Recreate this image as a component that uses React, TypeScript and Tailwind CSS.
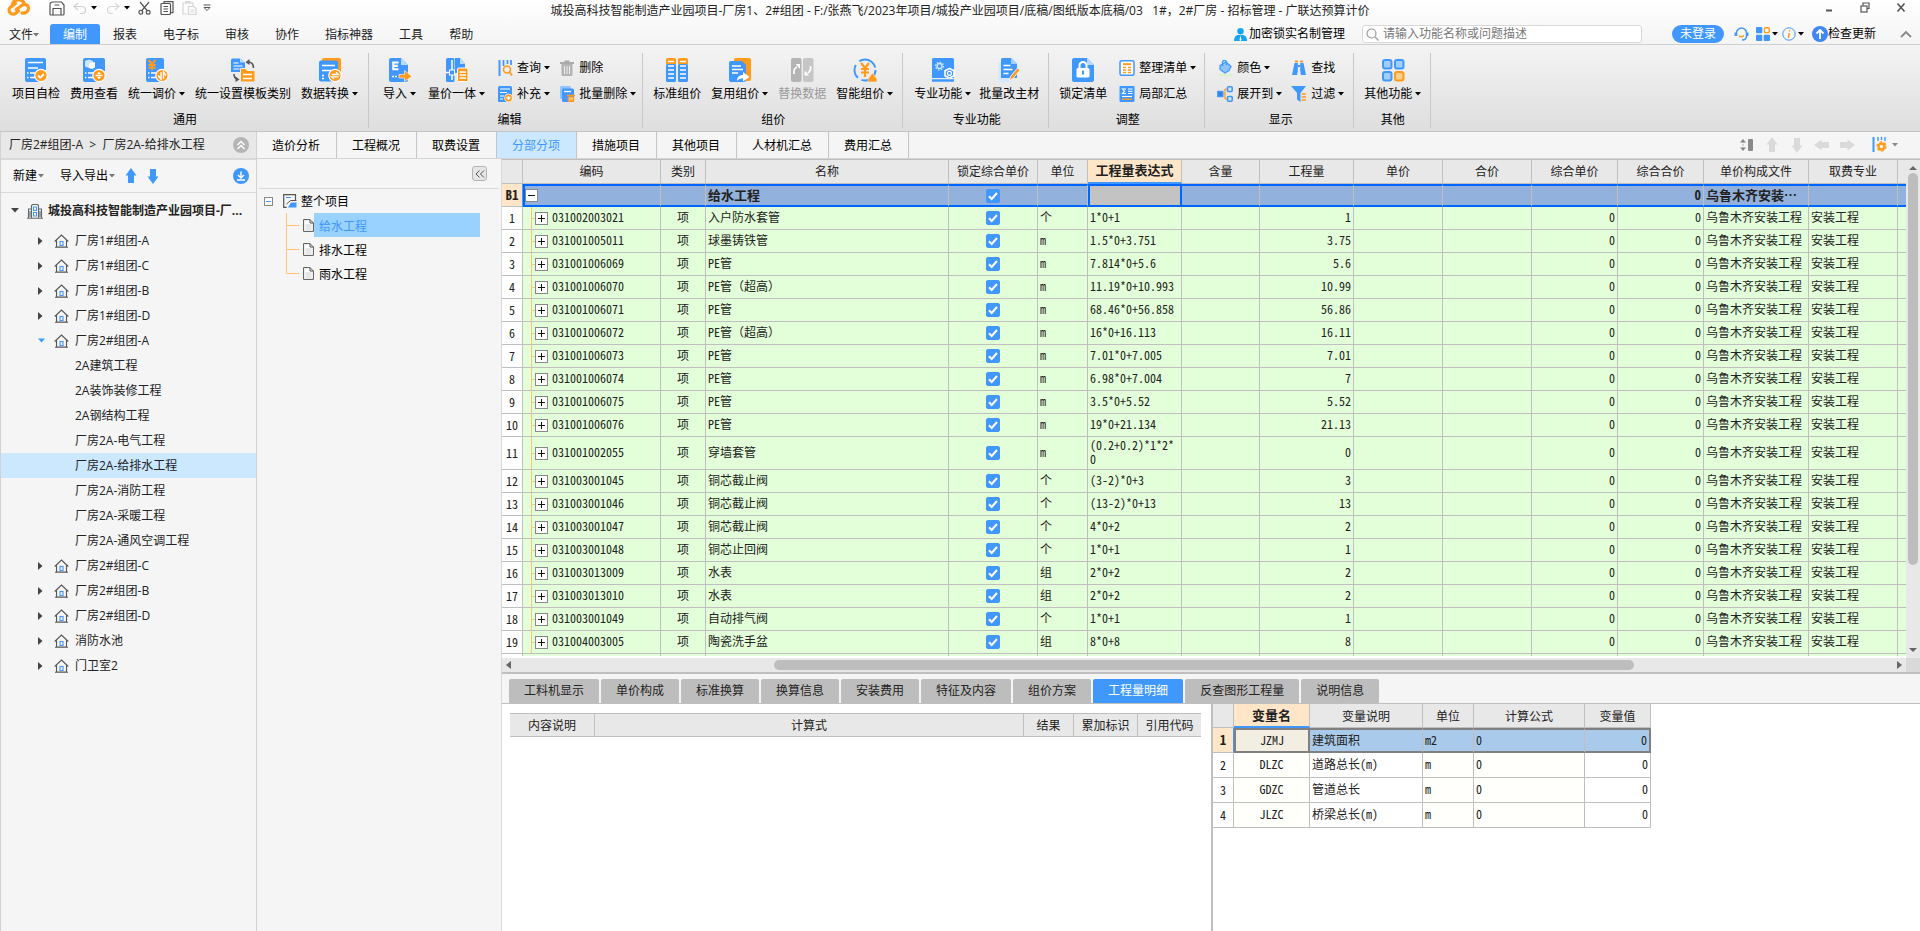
import React, { useState } from 'react';

const ui = "font-['Open_Sans','Noto_Sans_CJK_SC',sans-serif]";
const grid = "font-['Noto_Sans_CJK_SC',sans-serif] [font-feature-settings:'hwid']";

const BLUE = '#4098ff';
const ORANGE = '#ff9a1a';

/* ---------- icons ---------- */

const Caret = ({ className = 'text-black' }: { className?: string }) => (
  <svg width="6" height="4" viewBox="0 0 6 4" className={`shrink-0 ${className}`}>
    <path d="M0 0h6L3 3.6z" fill="currentColor" />
  </svg>
);

const Big = ({ children }: { children: React.ReactNode }) => (
  <svg width="24" height="24" viewBox="0 0 24 24" fill="none" className="shrink-0">
    {children}
  </svg>
);

const Small = ({ children }: { children: React.ReactNode }) => (
  <svg width="16" height="16" viewBox="0 0 16 16" fill="none" className="shrink-0">
    {children}
  </svg>
);

const Sheet = () => (
  <>
    <rect x="1" width="18" height="24" rx="2" fill={BLUE} />
    <path d="M6 15h6M6 19.500h5" stroke="#fff" strokeWidth="1.500" />
    <path d="M3 15h1.500M3 19.500h1.500" stroke="#fff" strokeWidth="1.500" />
  </>
);

const Badge = () => <circle cx="17" cy="17.500" r="6.200" fill={ORANGE} stroke="#fff" strokeWidth="1.200" />;

const CheckIcon = () => (
  <Big>
    <Sheet />
    <path d="M18 0h2a2 2 0 0 1 2 2v10h-4z" fill={BLUE} />
    <path d="M4 4.500h15M4 10h10" stroke="#fff" strokeWidth="1.600" />
    <Badge />
    <path d="M14 17.500l2.300 2.300L20 16" stroke="#fff" strokeWidth="1.800" />
  </Big>
);

const CostIcon = () => (
  <Big>
    <Sheet />
    <path d="M18 0h3a2 2 0 0 1 2 2v11h-5z" fill={BLUE} />
    <path d="M3 3l4-1.500 4 1.500v5.500l-4 1.500-4-1.500z" fill="#cfe6ff" />
    <path d="M7 5.500l6-1.500v5.500l-3 1.500-3-1z" fill="#fff" />
    <Badge />
    <path d="M13.500 17.500h7" stroke="#fff" strokeWidth="1.500" />
    <path d="M15 16l2-2.300 2 2.300zM15 19l2 2.300 2-2.300z" fill="#fff" />
  </Big>
);

const PriceIcon = () => (
  <Big>
    <Sheet />
    <path d="M3.500 2l3.500 4 3.500-4M7 6v6M3.500 7h7M3.500 9.800h7" stroke={ORANGE} strokeWidth="2" />
    <Badge />
    <path d="M16 14v7l-3-3.500M18.500 21v-7l2.500 3.500" stroke="#fff" strokeWidth="1.400" />
  </Big>
);

const TemplateIcon = () => (
  <Big>
    <path d="M0 2A1.500 1.500 0 0 1 1.500.5H9l5 4V14H0z" fill={BLUE} />
    <path d="M9 .5l5 4H9z" fill="#b8dbff" />
    <path d="M2.500 5h5M2.500 8h9M2.500 11h6" stroke="#fff" strokeWidth="1.200" />
    <path d="M9.500 10.500h5l1.500 2h8V24H9.500z" fill={ORANGE} stroke="#eee" />
    <path d="M12 16.500h9M12 20.500h9" stroke="#fff" strokeWidth="1.500" />
    <path d="M17 4c3.500 0 5.500 2 5.500 6" stroke="#555" strokeWidth="1.600" />
    <path d="M14.500 4.200l4-3.200v6z" fill="#555" />
    <path d="M3 16c0 3 1.500 4.500 3 5" stroke="#555" strokeWidth="1.600" />
    <path d="M8.500 21.500L4.500 24v-5.500z" fill="#555" />
  </Big>
);

const ConvertIcon = () => (
  <Big>
    <rect x="4" width="19" height="20" rx="1.500" fill={ORANGE} />
    <rect x="1" y="2.500" width="19" height="21" rx="2" fill={BLUE} />
    <path d="M4 7.500h13M4 12.500h9M4 17.500h2M4 20.500h2" stroke="#fff" strokeWidth="1.600" />
    <Badge />
    <path d="M13.500 16.500h7l-2.500-2.200M20.500 18.800h-7l2.500 2.200" stroke="#fff" strokeWidth="1.300" />
  </Big>
);

const ImportIcon = () => (
  <Big>
    <path d="M1 2a2 2 0 0 1 2-2h10l7 7v15a2 2 0 0 1-2 2H3a2 2 0 0 1-2-2z" fill={BLUE} />
    <path d="M13 0l7 7h-7z" fill="#b8dbff" />
    <path d="M10.500 4.500H5.300v6.800h5.200M5.300 7.900h4.500" stroke="#fff" strokeWidth="2.100" />
    <path d="M11 16.500h5.500v-4L24 18.500l-7.500 5v-3.500H11z" fill={ORANGE} stroke="#fff" strokeWidth=".6" />
    <path d="M4 18.500h2M7 18.500h2" stroke="#fff" strokeWidth="1.600" />
  </Big>
);

const MeasureIcon = () => (
  <Big>
    <rect x="1" width="8.500" height="24" rx="1.500" fill={BLUE} />
    <path d="M10 0h5l5 6v9H10z" fill={BLUE} />
    <path d="M15 0l5 6h-5z" fill="#b8dbff" />
    <path d="M1 14.500h9M7 2v20" stroke="#fff" strokeWidth="1.500" />
    <rect x="4.500" y="12" width="5" height="5" fill={BLUE} stroke="#fff" />
    <rect x="12.500" y="10" width="10.500" height="13.500" rx="1" fill={ORANGE} stroke="#fff" />
    <path d="M14.500 14h6.500M14.500 17h6.500M14.500 20h6.500" stroke="#fff" strokeWidth="1.300" />
  </Big>
);

const StandardIcon = () => (
  <Big>
    {[1, 13].map((x) => (
      <g key={x}>
        <rect x={x} y="0" width="10" height="7" rx="1.500" fill={ORANGE} />
        <rect x={x} y="6" width="10" height="18" rx="1.500" fill={BLUE} />
        <path
          d={`M${x + 2} 3.500h6M${x + 2} 8h6M${x + 2} 12h6M${x + 2} 16h6M${x + 2} 20h6`}
          stroke="#fff"
          strokeWidth="1.400"
        />
      </g>
    ))}
  </Big>
);

const ReuseIcon = () => (
  <Big>
    <rect x="6" width="17" height="23" rx="2" fill={ORANGE} />
    <path d="M1 5a2 2 0 0 1 2-2h11l4 4v15a2 2 0 0 1-2 2H3a2 2 0 0 1-2-2z" fill={BLUE} />
    <path d="M4 8h9M4 11.500h11M4 15h6" stroke="#fff" strokeWidth="1.500" />
    <path d="M9 23c0-4 2.500-6 6-6v-3l6.500 5-6.500 4.500V20.500c-2.500 0-4.500.5-6 2.500z" fill="#fff" />
  </Big>
);

const ReplaceIcon = () => (
  <Big>
    <rect x="1" width="10.500" height="24" rx="2" fill="#b4b4b4" />
    <rect x="13" width="10.500" height="24" rx="2" fill="#c6c6c6" />
    <path d="M4 16c-.5-4 .5-6 3-7" stroke="#fff" strokeWidth="1.800" />
    <path d="M5.500 6H10v5z" fill="#fff" />
    <path d="M20.500 8c.5 4-.5 6-3 7" stroke="#fff" strokeWidth="1.800" />
    <path d="M19 17.500h-4.500v-5z" fill="#fff" />
  </Big>
);

const SmartIcon = () => (
  <Big>
    <circle cx="12" cy="12" r="10.500" stroke={BLUE} strokeWidth="2" strokeDasharray="20 4 14 5" />
    <path d="M8 5l4 5 4-5M12 10v9M8 11h8M8 14.500h8" stroke={ORANGE} strokeWidth="2.200" />
    <path d="M15 21l4.500-6L24 21v3h-9z" fill={ORANGE} stroke="#eee" strokeWidth=".6" />
  </Big>
);

const ProIcon = () => (
  <Big>
    <path d="M1 1.500A1.500 1.500 0 0 1 2.500 0h19A1.500 1.500 0 0 1 23 1.500V20H1z" fill={BLUE} />
    <path d="M1 22.500h22" stroke={BLUE} strokeWidth="2.500" />
    <circle cx="8.500" cy="8" r="2.500" stroke="#d5e9ff" strokeWidth="1.300" />
    <circle cx="8.500" cy="8" r="4" stroke="#d5e9ff" strokeWidth="1.200" strokeDasharray="1.500 1.600" />
    <path d="M18.500 10.500l4.500 2.300v4.900L18.500 20 14 17.700v-4.900z" fill={BLUE} stroke="#fff" strokeWidth="1.600" />
    <circle cx="18.500" cy="15.300" r="2" stroke="#fff" strokeWidth="1.200" />
  </Big>
);

const BatchEditIcon = () => (
  <Big>
    <rect x="1.500" y="4" width="14" height="20" rx="2" fill="#d3e8ff" />
    <path d="M4 1.500A1.500 1.500 0 0 1 5.500 0H14l6 6v14H4z" fill={BLUE} />
    <path d="M14 0l6 6h-6z" fill="#9fd0ff" />
    <path d="M6.500 7.500h7M6.500 11.500h9M6.500 15.500h5" stroke="#fff" strokeWidth="1.600" />
    <path d="M12.500 22.500l1-4 7-8.500 2.500 2-7 8.500z" fill={ORANGE} stroke="#fff" strokeWidth=".8" />
  </Big>
);

const LockIcon = () => (
  <Big>
    <path d="M1 2a2 2 0 0 1 2-2h13l7 7v15a2 2 0 0 1-2 2H3a2 2 0 0 1-2-2z" fill={BLUE} />
    <path d="M16 0l7 7h-7z" fill="#b8dbff" />
    <path d="M8.500 11V7.500a3.500 3.500 0 0 1 7 0V11" stroke="#fff" strokeWidth="2" />
    <rect x="5.500" y="10" width="13" height="9.500" rx="1.500" fill="#fff" />
    <path d="M12 12.500v4" stroke={BLUE} strokeWidth="2" />
  </Big>
);

const OtherIcon = () => (
  <Big>
    <rect x="2" y="2" width="8.500" height="8.500" rx="2" fill="#9fceff" stroke={BLUE} strokeWidth="2" />
    <rect x="14" y="2" width="8.500" height="8.500" rx="2" fill="#9fceff" stroke={BLUE} strokeWidth="2" />
    <rect x="2" y="14" width="8.500" height="8.500" rx="2" fill="#9fceff" stroke={BLUE} strokeWidth="2" />
    <rect x="14" y="14" width="8.500" height="8.500" rx="2" fill="#ffd08a" stroke={ORANGE} strokeWidth="2" />
  </Big>
);

const QueryIcon = () => (
  <Small>
    <path d="M2.500 0v16" stroke={BLUE} strokeWidth="2" />
    <path d="M6.500 0v6M10.500 0v4M14 0v5" stroke={BLUE} strokeWidth="1.800" />
    <circle cx="10" cy="9.500" r="3.500" stroke={ORANGE} strokeWidth="1.600" />
    <path d="M12.500 12l2.500 3.500" stroke={ORANGE} strokeWidth="1.800" />
  </Small>
);

const TrashIcon = () => (
  <Small>
    <path d="M1 3h14M5.500 1.500h5" stroke="#aaa" strokeWidth="2" />
    <path d="M2.500 4h11v11a1 1 0 0 1-1 1h-9a1 1 0 0 1-1-1z" fill="#b4b4b4" />
    <path d="M5.500 6v8M8 6v8M10.500 6v8" stroke="#eee" />
  </Small>
);

const AddIcon = () => (
  <Small>
    <path d="M1 1.500A1.500 1.500 0 0 1 2.500 0h11A1.500 1.500 0 0 1 15 1.500V9H1z" fill={BLUE} />
    <rect x="1" y="8" width="9" height="8" rx="1" fill={BLUE} />
    <path d="M3 3h10M3 6.500h7M3 10h4M3 13h3" stroke="#fff" strokeWidth="1.200" />
    <circle cx="11.500" cy="12" r="4" fill={ORANGE} stroke="#fff" strokeWidth=".7" />
    <path d="M9.500 12h4M11.500 10v4" stroke="#fff" strokeWidth="1.300" />
  </Small>
);

const BatchDeleteIcon = () => (
  <Small>
    <rect x="1" width="11" height="13" rx="1.500" fill="#8fc4ff" />
    <rect x="3" y="2.500" width="12" height="13.500" rx="1.500" fill={BLUE} />
    <path d="M5 5.500h7" stroke="#fff" strokeWidth="1.300" />
    <path d="M8 9.500h8" stroke={ORANGE} strokeWidth="1.500" />
    <rect x="8.800" y="10.500" width="6.400" height="5.500" fill={ORANGE} />
    <path d="M11 11.500v3M13 11.500v3" stroke="#fff" strokeWidth=".8" />
  </Small>
);

const ArrangeIcon = () => (
  <Small>
    <rect x="1" y=".8" width="14" height="14.500" rx="1.500" fill="#fff" stroke={BLUE} strokeWidth="1.500" />
    <path d="M4 4.200h8" stroke={ORANGE} strokeWidth="2" />
    <path d="M4 7.500h3M4 10h3M4 12.500h3M9 7.500h3M9 10h3M9 12.500h3" stroke={ORANGE} strokeWidth="1.300" />
  </Small>
);

const SumIcon = () => (
  <Small>
    <rect x=".5" width="15" height="16" rx="1" fill={BLUE} />
    <path d="M7 3H3.500l2 2.200-2 2.300H7M9 3h4.500M9 5.200h4.500M9 7.500h4.500" stroke="#fff" strokeWidth="1.100" />
    <path d="M3 10.500h10" stroke="#fff" strokeWidth="1.100" />
    <path d="M3 13.200h10" stroke={ORANGE} strokeWidth="1.300" />
  </Small>
);

const ColorIcon = () => (
  <Small>
    <path d="M3 5.500L9 2l5 4.500-2 4-4 2.500L3 9.500z" fill="#8fc4ff" stroke={BLUE} strokeWidth="1.200" />
    <path d="M5.500 6V2.500a2 2 0 0 1 4 0V5" stroke={BLUE} strokeWidth="1.300" />
    <path d="M1 15h14" stroke="#d9f5c4" strokeWidth="1.800" />
  </Small>
);

const ExpandIcon = () => (
  <Small>
    <path d="M5 8h3M8 3h3M8 13h3M8 3v10" stroke={ORANGE} strokeWidth="1.200" />
    <rect x=".8" y="5.500" width="5" height="5" fill="#2d7ff0" stroke={BLUE} strokeWidth="1.400" />
    <rect x="10.500" y=".8" width="4.700" height="4.700" rx="1" fill="#d5e9ff" stroke={BLUE} strokeWidth="1.600" />
    <rect x="10.500" y="10.500" width="4.700" height="4.700" rx="1" fill="#d5e9ff" stroke={BLUE} strokeWidth="1.600" />
  </Small>
);

const FindIcon = () => (
  <Small>
    <path d="M3.500 3h3.300v8L6 15H1z" fill={BLUE} />
    <path d="M9.200 3h3.300L15 15h-5l-.8-4z" fill={BLUE} />
    <path d="M4 1.500h2.800M9.200 1.500H12" stroke={ORANGE} strokeWidth="1.800" />
    <path d="M7 6h2" stroke={BLUE} strokeWidth="2" />
  </Small>
);

const FilterIcon = () => (
  <Small>
    <path d="M0 0h15L9.500 7v9L6 13.500V7z" fill={BLUE} />
    <path d="M10.500 8h4.500M10.500 11h4.500M10.500 14h4.500" stroke={ORANGE} strokeWidth="1.600" />
  </Small>
);

const Logo = () => (
  <svg width="24" height="17" viewBox="0 0 24 17" fill="none" className="mt-[-1px] shrink-0">
    <path
      d="M11.500 12l-2.800 2.200a4 4 0 0 1-5.500-5.800L8.500 4.500M5.500 5.500C6 2.500 8.500 1 11.500 1s5.500 1.700 6 4.200M9.300 10.500l6-4.500c2.700-1.600 6-.2 6.200 3 .2 3.600-3.500 5.800-6.500 5"
      stroke={ORANGE}
      strokeWidth="3.200"
      strokeLinecap="round"
    />
  </svg>
);

const HouseIcon = () => (
  <svg width="15" height="14" viewBox="0 0 15 14" fill="none" className="shrink-0">
    <path d="M.7 7.500L7.500 1l6.800 6.500M2.500 6.500v6.500h10V6.500M1 13.200h13" stroke="#555" strokeWidth="1.100" />
    <rect x="6" y="7.500" width="3" height="4" stroke={BLUE} strokeWidth="1.100" />
  </svg>
);

const BuildingIcon = () => (
  <svg width="16" height="16" viewBox="0 0 16 16" fill="none" className="shrink-0">
    <path d="M4.500 15V2.500l1-1h5l1 1V15M4.500 6H1.500v9M11.500 6h3v9M0 15.200h16M3 8v6M13 8v6" stroke="#666" strokeWidth="1.100" />
    <rect x="6.500" y="4" width="3" height="3.500" stroke={BLUE} />
    <rect x="6.500" y="9.500" width="3" height="3.500" stroke={BLUE} />
  </svg>
);

const DocIcon = () => (
  <svg width="11" height="13" viewBox="0 0 11 13" fill="none" className="shrink-0">
    <path d="M.6.6h6.400l3.400 3.400v8.400H.6z" fill="#fff" stroke="#555" />
    <path d="M7 .6v3.400h3.400" stroke="#555" />
    <path d="M2.500 6h6M2.500 8h6M2.500 10h6" stroke="#ccc" />
  </svg>
);

const ProjectIcon = () => (
  <svg width="14" height="14" viewBox="0 0 14 14" fill="none" className="shrink-0">
    <path d="M12.500 6V.7H.7v12.600h3" stroke="#555" strokeWidth="1.200" />
    <path d="M3 3.500h5" stroke={BLUE} />
    <path d="M3.500 10l4-3.500h6" stroke="#555" />
    <path d="M5 13.500l3-5h5.500v5z" fill={BLUE} />
  </svg>
);

const BlockArrow = ({ className, dir }: { className: string; dir: 'up' | 'down' | 'left' | 'right' }) => {
  const turn = { up: 0, right: 90, down: 180, left: 270 }[dir];
  return (
    <svg width="16" height="16" viewBox="0 0 16 16" className={`shrink-0 ${className}`}>
      <path d="M8 0l5.500 7.500H11V15H5V7.500H2.500z" fill="currentColor" transform={`rotate(${turn} 8 8)`} />
    </svg>
  );
};

/* ---------- title and menu ---------- */

const TitleBar = () => (
  <div className="grid h-6 grid-cols-[1fr_auto_1fr] items-start">
    <div className="flex items-center pl-[7px] text-[#555]">
      <Logo />
      <button aria-label="保存" className="ml-[18px]">
        <svg width="16" height="15" viewBox="0 0 16 15" fill="none" stroke="currentColor" strokeWidth="1.200">
          <path d="M1 3.500V13a1 1 0 0 0 1 1h12a1 1 0 0 0 1-1V4l-2.500-3h-9A2.500 2.500 0 0 0 1 3.500zM4 14V7.500h8V14M5.500 4h5" />
        </svg>
      </button>
      <button aria-label="撤销" className="ml-2 flex items-center gap-1 text-[#d0d0d0]">
        <svg width="14" height="13" viewBox="0 0 14 13" fill="none" stroke="currentColor" strokeWidth="1.200">
          <path d="M5 1L1 4.500 5 8M1 4.500h8a3.500 3.500 0 0 1 0 7H7" />
        </svg>
        <Caret />
      </button>
      <button aria-label="恢复" className="ml-[9px] flex items-center gap-1 text-[#d8d8d8]">
        <svg width="14" height="13" viewBox="0 0 14 13" fill="none" stroke="currentColor" strokeWidth="1.200">
          <path d="M9 1l4 3.500L9 8M13 4.500H5a3.500 3.500 0 0 0 0 7h2" />
        </svg>
        <Caret />
      </button>
      <button aria-label="剪切" className="ml-2">
        <svg width="13" height="14" viewBox="0 0 13 14" fill="none" stroke="currentColor" strokeWidth="1.200">
          <path d="M2 1l7.500 9M11 1L3.500 10" />
          <circle cx="2.800" cy="11.300" r="1.900" />
          <circle cx="10.200" cy="11.300" r="1.900" />
        </svg>
      </button>
      <button aria-label="复制" className="ml-[9px]">
        <svg width="14" height="14" viewBox="0 0 14 14" fill="none" stroke="currentColor" strokeWidth="1.200">
          <path d="M4 3V.7h9v11h-2" />
          <rect x="1" y="2.500" width="9.500" height="11" rx="1" />
          <path d="M3.500 5.500h4.500M3.500 8h4.500M3.500 10.500h4.500" />
        </svg>
      </button>
      <button aria-label="粘贴" className="ml-2 text-[#d5d5d5]">
        <svg width="15" height="14" viewBox="0 0 15 14" fill="none" stroke="currentColor" strokeWidth="1.200">
          <path d="M5 13H1V2h10v3M4 3V.7h4V3" />
          <path d="M6.500 5.500H12l2 2v6H6.500zM8.500 9h3.500M8.500 11h3.500" />
        </svg>
      </button>
      <button aria-label="自定义" className="ml-[6px]">
        <svg width="8" height="8" viewBox="0 0 8 8" fill="none" stroke="currentColor">
          <path d="M.5 1h7M1 3.500h6L4 6.500z" />
        </svg>
      </button>
    </div>
    <h1 className="pt-[2px] text-xs leading-[18px] text-[#222]">
      城投高科技智能制造产业园项目-厂房1、2#组团 - F:/张燕飞/2023年项目/城投产业园项目/底稿/图纸版本底稿/03&nbsp;&nbsp; 1#，2#厂房 - 招标管理 - 广联达预算计价
    </h1>
    <div className="flex justify-end gap-[26px] pr-[14px] pt-[2px] text-[#555]">
      <button aria-label="最小化">
        <svg width="10" height="11" viewBox="0 0 10 11">
          <path d="M2 8.500h6" stroke="currentColor" strokeWidth="2" />
        </svg>
      </button>
      <button aria-label="还原">
        <svg width="10" height="11" viewBox="0 0 10 11" fill="none" stroke="currentColor" strokeWidth="1.200">
          <path d="M3 3.500V1h6v5.500H7" />
          <rect x="1" y="4" width="6" height="6" />
        </svg>
      </button>
      <button aria-label="关闭">
        <svg width="10" height="11" viewBox="0 0 10 11" stroke="currentColor" strokeWidth="1.600">
          <path d="M1.500 1.500l7 8M8.500 1.500l-7 8" />
        </svg>
      </button>
    </div>
  </div>
);

const MENUS = ['编制', '报表', '电子标', '审核', '协作', '指标神器', '工具', '帮助'];

const MenuBar = () => (
  <div className="flex h-[21px] items-center border-b border-[#cfcfcf] text-xs leading-5 text-[#222]">
    <button className="flex items-center pl-[9px] pr-[11px] pt-[2px] leading-[18px]">
      文件
      <Caret className="text-[#777]" />
    </button>
    {MENUS.map((m, i) => (
      <button
        key={m}
        className={`px-[13px] pt-[2px] leading-[18px] ${i === 0 ? 'rounded-t-[3px] bg-[#4098ff] text-white' : ''}`}
      >
        {m}
      </button>
    ))}
    <div className="ml-auto flex items-center pr-2">
      <button className="flex items-center gap-[2px] text-black">
        <svg width="13" height="13" viewBox="0 0 13 13" fill="#12a5f4">
          <circle cx="6.500" cy="3.300" r="3.200" />
          <path d="M0 13c0-4 2-6 4.500-6h4c2.500 0 4.500 2 4.500 6z" />
          <path d="M6.500 7l1 5-1 1-1-1z" fill="#fff" />
        </svg>
        加密锁实名制管理
      </button>
      <label className="ml-[17px] flex h-[18px] w-[280px] items-center gap-1 rounded-[3px] border border-[#d9d9d9] bg-white pl-[3px]">
        <svg width="13" height="13" viewBox="0 0 13 13" fill="none" stroke="#999" strokeWidth="1.200">
          <circle cx="5.500" cy="5.500" r="4.500" />
          <path d="M9 9l3.500 3.500" />
        </svg>
        <input
          type="text"
          aria-label="搜索"
          placeholder="请输入功能名称或问题描述"
          className="h-4 min-w-0 flex-1 text-xs leading-4 outline-none placeholder:text-[#777]"
        />
      </label>
      <button className="ml-[30px] h-[18px] rounded-full bg-[#4098ff] px-2 leading-[18px] text-white">未登录</button>
      <button aria-label="客服" className="ml-[10px]">
        <svg width="15" height="14" viewBox="0 0 15 14" fill="none">
          <path d="M2.500 9V6a5 5 0 0 1 10 0v3c0 2.500-2 4-4.500 4" stroke={BLUE} strokeWidth="1.500" />
          <path d="M1.500 5.500v3.500M13.500 5.500v3.500" stroke={BLUE} strokeWidth="2" />
          <path d="M5 8.500c1.500 1.500 3.500 1.500 5 0" stroke={ORANGE} strokeWidth="1.500" />
        </svg>
      </button>
      <button aria-label="应用" className="ml-[7px] flex items-center gap-[2px]">
        <svg width="14" height="14" viewBox="0 0 14 14" fill={BLUE}>
          <rect y="0" width="6.300" height="6.300" rx="1" />
          <rect y="7.700" width="6.300" height="6.300" rx="1" />
          <rect x="7.700" y="7.700" width="6.300" height="6.300" rx="1" />
          <rect x="8.400" y=".7" width="4.900" height="4.900" rx="1" fill="none" stroke={ORANGE} strokeWidth="1.400" />
        </svg>
        <Caret />
      </button>
      <button aria-label="帮助信息" className="ml-1 flex items-center gap-[2px]">
        <svg width="14" height="14" viewBox="0 0 14 14" fill="none">
          <circle cx="7" cy="7" r="6.200" stroke={BLUE} />
          <path d="M7.500 3v1.500M7.200 6l-.8 5" stroke={ORANGE} strokeWidth="1.500" />
        </svg>
        <Caret />
      </button>
      <button className="ml-2 flex items-center text-black">
        <svg width="16" height="16" viewBox="0 0 16 16">
          <circle cx="8" cy="8" r="8" fill="#3f87f5" />
          <path d="M8 13V4M4.500 7.500L8 4l3.500 3.500" stroke="#fff" strokeWidth="1.800" fill="none" />
        </svg>
        检查更新
      </button>
      <button aria-label="收起功能区" className="ml-6">
        <svg width="12" height="8" viewBox="0 0 12 8" fill="none" stroke="#888" strokeWidth="1.800">
          <path d="M1 7l5-5 5 5" />
        </svg>
      </button>
    </div>
  </div>
);

/* ---------- ribbon ---------- */

interface ToolProps {
  icon: React.ReactNode;
  label: string;
  menu?: boolean;
  disabled?: boolean;
}

const BigTool = ({ icon, label, menu, disabled }: ToolProps) => (
  <button disabled={disabled} className={`flex flex-col items-center gap-1 ${disabled ? 'text-[#999]' : 'text-black'}`}>
    {icon}
    <span className="flex items-center gap-[3px] whitespace-nowrap leading-4">
      {label}
      {menu && <Caret />}
    </span>
  </button>
);

const SmallTool = ({ icon, label, menu }: ToolProps) => (
  <button className="flex h-4 items-center gap-1 whitespace-nowrap leading-4 text-black">
    {icon}
    <span className="flex items-center gap-[3px]">
      {label}
      {menu && <Caret />}
    </span>
  </button>
);

const Stack = ({ children }: { children: React.ReactNode }) => (
  <div className="flex h-11 flex-col justify-end gap-[10px]">{children}</div>
);

const Group = ({ name, className, children }: { name: string; className: string; children: React.ReactNode }) => (
  <section className={`mt-2 flex h-[75px] flex-col items-center justify-between border-r border-[#c8c8c8] pt-[5px] ${className}`}>
    <div className="flex">{children}</div>
    <div className="leading-4">{name}</div>
  </section>
);

const Ribbon = () => (
  <div className="flex h-[87px] border-b border-[#c4c4c4] bg-linear-to-b from-[#f4f4f4] to-[#dedede] text-xs text-black">
    <Group name="通用" className="pl-3 pr-[10px] [&>div]:gap-[10px]">
      <BigTool icon={<CheckIcon />} label="项目自检" />
      <BigTool icon={<CostIcon />} label="费用查看" />
      <BigTool icon={<PriceIcon />} label="统一调价" menu />
      <BigTool icon={<TemplateIcon />} label="统一设置模板类别" />
      <BigTool icon={<ConvertIcon />} label="数据转换" menu />
    </Group>
    <Group name="编辑" className="pl-[14px] pr-[6px] [&>div]:gap-3">
      <BigTool icon={<ImportIcon />} label="导入" menu />
      <BigTool icon={<MeasureIcon />} label="量价一体" menu />
      <div className="flex gap-[9px]">
        <Stack>
          <SmallTool icon={<QueryIcon />} label="查询" menu />
          <SmallTool icon={<AddIcon />} label="补充" menu />
        </Stack>
        <Stack>
          <SmallTool icon={<TrashIcon />} label="删除" />
          <SmallTool icon={<BatchDeleteIcon />} label="批量删除" menu />
        </Stack>
      </div>
    </Group>
    <Group name="组价" className="pl-[10px] pr-[9px] [&>div]:gap-[10px]">
      <BigTool icon={<StandardIcon />} label="标准组价" />
      <BigTool icon={<ReuseIcon />} label="复用组价" menu />
      <BigTool icon={<ReplaceIcon />} label="替换数据" disabled />
      <BigTool icon={<SmartIcon />} label="智能组价" menu />
    </Group>
    <Group name="专业功能" className="pl-[11px] pr-[9px] [&>div]:gap-2">
      <BigTool icon={<ProIcon />} label="专业功能" menu />
      <BigTool icon={<BatchEditIcon />} label="批量改主材" />
    </Group>
    <Group name="调整" className="pl-[10px] pr-2 [&>div]:gap-3">
      <BigTool icon={<LockIcon />} label="锁定清单" />
      <Stack>
        <SmallTool icon={<ArrangeIcon />} label="整理清单" menu />
        <SmallTool icon={<SumIcon />} label="局部汇总" />
      </Stack>
    </Group>
    <Group name="显示" className="pl-3 pr-[9px] [&>div]:gap-[9px]">
      <Stack>
        <SmallTool icon={<ColorIcon />} label="颜色" menu />
        <SmallTool icon={<ExpandIcon />} label="展开到" menu />
      </Stack>
      <Stack>
        <SmallTool icon={<FindIcon />} label="查找" />
        <SmallTool icon={<FilterIcon />} label="过滤" menu />
      </Stack>
    </Group>
    <Group name="其他" className="pl-[10px] pr-[9px]">
      <BigTool icon={<OtherIcon />} label="其他功能" menu />
    </Group>
  </div>
);

/* ---------- project tree ---------- */

interface TreeNode {
  name: string;
  open?: boolean;
  children?: string[];
}

const PROJECT: TreeNode[] = [
  { name: '厂房1#组团-A' },
  { name: '厂房1#组团-C' },
  { name: '厂房1#组团-B' },
  { name: '厂房1#组团-D' },
  {
    name: '厂房2#组团-A',
    open: true,
    children: [
      '2A建筑工程',
      '2A装饰装修工程',
      '2A钢结构工程',
      '厂房2A-电气工程',
      '厂房2A-给排水工程',
      '厂房2A-消防工程',
      '厂房2A-采暖工程',
      '厂房2A-通风空调工程',
    ],
  },
  { name: '厂房2#组团-C' },
  { name: '厂房2#组团-B' },
  { name: '厂房2#组团-D' },
  { name: '消防水池' },
  { name: '门卫室2' },
];

const Sidebar = () => (
  <aside className="flex w-[257px] shrink-0 flex-col border-x border-[#d2d2d2] bg-[#f5f5f5] text-xs text-[#222]">
    <div className="flex h-[28px] items-center justify-between border-b-2 border-[#d9d9d9] bg-[#e8e8e8] pl-2 pr-[7px]">
      <span>厂房2#组团-A&nbsp; &gt;&nbsp; 厂房2A-给排水工程</span>
      <button aria-label="收起">
        <svg width="16" height="16" viewBox="0 0 16 16" fill="none" stroke="#fff" strokeWidth="1.400">
          <circle cx="8" cy="8" r="8" fill="#b5b5b5" stroke="none" />
          <path d="M4.500 8L8 4.500 11.500 8M4.500 12L8 8.500l3.500 3.500" />
        </svg>
      </button>
    </div>
    <div className="flex h-[33px] items-center border-b border-[#d9d9d9] pl-3 pr-[7px] text-black">
      <button className="flex items-center gap-[1px]">
        新建
        <Caret className="text-[#777]" />
      </button>
      <button className="ml-4 flex items-center gap-[1px]">
        导入导出
        <Caret className="text-[#777]" />
      </button>
      <button aria-label="上移" className="ml-2">
        <BlockArrow dir="up" className="text-[#4098ff]" />
      </button>
      <button aria-label="下移" className="ml-[6px]">
        <BlockArrow dir="down" className="text-[#4098ff]" />
      </button>
      <button aria-label="下载" className="ml-auto">
        <svg width="16" height="16" viewBox="0 0 16 16" fill="none" stroke="#fff" strokeWidth="1.400">
          <circle cx="8" cy="8" r="8" fill={BLUE} stroke="none" />
          <path d="M8 3.500v6M5 7l3 3 3-3M4 12h8" />
        </svg>
      </button>
    </div>
    <div className="flex h-[35px] items-center pl-[10px]">
      <svg width="8" height="5" viewBox="0 0 8 5">
        <path d="M0 0h8L4 4.500z" fill="#444" />
      </svg>
      <span className="ml-2">
        <BuildingIcon />
      </span>
      <span className="ml-[5px] truncate font-bold">城投高科技智能制造产业园项目-厂...</span>
    </div>
    <ul>
      {PROJECT.map((node) => (
        <li key={node.name}>
          <div className="flex h-[25px] items-center pl-[37px]">
            {node.open ? (
              <svg width="7" height="8" viewBox="0 0 7 8">
                <path d="M0 1.500h7L3.500 5.500z" fill={BLUE} />
              </svg>
            ) : (
              <svg width="7" height="8" viewBox="0 0 7 8">
                <path d="M0 0l4.500 4L0 8z" fill="#444" />
              </svg>
            )}
            <span className="ml-[9px]">
              <HouseIcon />
            </span>
            <span className="ml-[6px]">{node.name}</span>
          </div>
          {node.children && (
            <ul>
              {node.children.map((c) => (
                <li
                  key={c}
                  className={`flex h-[25px] items-center pl-[74px] ${c === '厂房2A-给排水工程' ? 'bg-[#cce8ff]' : ''}`}
                >
                  {c}
                </li>
              ))}
            </ul>
          )}
        </li>
      ))}
    </ul>
  </aside>
);

/* ---------- workspace tabs ---------- */

const TABS = ['造价分析', '工程概况', '取费设置', '分部分项', '措施项目', '其他项目', '人材机汇总', '费用汇总'];

const WorkTabs = ({ active, onChange }: { active: string; onChange: (t: string) => void }) => (
  <div className="flex h-[27px] items-stretch border-b border-[#d4d4d4] bg-[#f5f5f5] text-xs text-black">
    {TABS.map((t) => (
      <button
        key={t}
        onClick={() => onChange(t)}
        className={`border-r border-[#c4c4c4] pl-[15px] pr-4 pt-[2px] ${t === active ? 'bg-[#cce8ff] text-[#4098ff]' : ''}`}
      >
        {t}
      </button>
    ))}
    <div className="ml-auto flex items-center gap-[9px] pr-[22px]">
      <button aria-label="行高">
        <svg width="16" height="14" viewBox="0 0 16 14" fill="none">
          <path d="M4 3v8" stroke="#bbb" strokeWidth="1.200" strokeDasharray="2 1" />
          <path d="M1 4.500L4 1l3 3.500zM1 9.500L4 13l3-3.500z" fill="#888" />
          <rect x="9" y="1" width="5" height="12" rx="1" fill="#8a8a8a" />
        </svg>
      </button>
      <button aria-label="升级">
        <BlockArrow dir="up" className="text-[#dadada]" />
      </button>
      <button aria-label="降级">
        <BlockArrow dir="down" className="text-[#dadada]" />
      </button>
      <button aria-label="左移">
        <BlockArrow dir="left" className="text-[#dadada]" />
      </button>
      <button aria-label="右移">
        <BlockArrow dir="right" className="text-[#dadada]" />
      </button>
      <button aria-label="列设置" className="ml-2 flex items-center gap-1">
        <svg width="16" height="16" viewBox="0 0 16 16" fill="none">
          <path d="M1.500 0v15" stroke={BLUE} strokeWidth="2" />
          <path d="M6 0v4M9.500 0v3M13 0v4" stroke={BLUE} strokeWidth="1.400" />
          <circle cx="9.500" cy="9.500" r="3" stroke={ORANGE} strokeWidth="2.400" />
          <circle cx="9.500" cy="9.500" r="4.600" stroke={ORANGE} strokeWidth="1.200" strokeDasharray="2.400 2.400" />
        </svg>
        <Caret className="text-[#888]" />
      </button>
    </div>
  </div>
);

const SECTIONS = ['给水工程', '排水工程', '雨水工程'];

const SectionTree = () => (
  <nav className="w-[245px] shrink-0 border-r border-[#d9d9d9] bg-[#f5f5f5] text-xs text-black">
    <div className="mx-[2px] flex h-[30px] items-center justify-end border-b border-[#d9d9d9] pr-3">
      <button
        aria-label="折叠"
        className="flex h-[15px] w-[15px] items-center justify-center rounded-[3px] border border-[#b4b4b4] bg-[#e6e6e6]"
      >
        <svg width="10" height="8" viewBox="0 0 10 8" fill="none" stroke="#555">
          <path d="M4.500 .5L1 4l3.500 3.500M9 .5L5.500 4 9 7.500" />
        </svg>
      </button>
    </div>
    <div className="flex h-6 items-center pl-[7px]">
      <svg width="9" height="9" viewBox="0 0 9 9" fill="none">
        <rect x=".5" y=".5" width="8" height="8" fill="#fff" stroke="#888" />
        <path d="M2 4.500h5" stroke={BLUE} />
      </svg>
      <span className="ml-[10px]">
        <ProjectIcon />
      </span>
      <span className="ml-1 pt-[2px]">整个项目</span>
    </div>
    <ul>
      {SECTIONS.map((s, i) => (
        <li key={s} className="flex h-6 items-center pl-[29px]">
          <svg width="13" height="24" viewBox="0 0 13 24" fill="none" className="mr-1 shrink-0">
            <path d={i === SECTIONS.length - 1 ? 'M.5 0v12.500H13' : 'M.5 0v24M.5 12.500H13'} stroke="#ffc56e" />
          </svg>
          <DocIcon />
          <span
            className={`flex h-6 w-[166px] items-center pl-[5px] pt-[3px] ${i === 0 ? 'bg-[#99d1ff] text-[#4098ff]' : ''}`}
          >
            {s}
          </span>
        </li>
      ))}
    </ul>
  </nav>
);

/* ---------- main grid ---------- */

const COLS = [
  'w-[21px]',
  'w-[138px]',
  'w-[45px]',
  'w-[243px]',
  'w-[89px]',
  'w-[50px]',
  'w-[94px]',
  'w-[78px]',
  'w-[94px]',
  'w-[89px]',
  'w-[89px]',
  'w-[86px]',
  'w-[86px]',
  'w-[105px]',
  'w-[89px]',
  '',
];

const HEADS = [
  '', '编码', '类别', '名称', '锁定综合单价', '单位', '工程量表达式', '含量',
  '工程量', '单价', '合价', '综合单价', '综合合价', '单价构成文件', '取费专业', '',
];

// code, name, unit, expression, quantity
const ROWS: [string, string, string, string, string][] = [
  ['031002003021', '入户防水套管', '个', '1*0+1', '1'],
  ['031001005011', '球墨铸铁管', 'm', '1.5*0+3.751', '3.75'],
  ['031001006069', 'PE管', 'm', '7.814*0+5.6', '5.6'],
  ['031001006070', 'PE管（超高）', 'm', '11.19*0+10.993', '10.99'],
  ['031001006071', 'PE管', 'm', '68.46*0+56.858', '56.86'],
  ['031001006072', 'PE管（超高）', 'm', '16*0+16.113', '16.11'],
  ['031001006073', 'PE管', 'm', '7.01*0+7.005', '7.01'],
  ['031001006074', 'PE管', 'm', '6.98*0+7.004', '7'],
  ['031001006075', 'PE管', 'm', '3.5*0+5.52', '5.52'],
  ['031001006076', 'PE管', 'm', '19*0+21.134', '21.13'],
  ['031001002055', '穿墙套管', 'm', '(0.2+0.2)*1*2*0', '0'],
  ['031003001045', '铜芯截止阀', '个', '(3-2)*0+3', '3'],
  ['031003001046', '铜芯截止阀', '个', '(13-2)*0+13', '13'],
  ['031003001047', '铜芯截止阀', '个', '4*0+2', '2'],
  ['031003001048', '铜芯止回阀', '个', '1*0+1', '1'],
  ['031003013009', '水表', '组', '2*0+2', '2'],
  ['031003013010', '水表', '组', '2*0+2', '2'],
  ['031003001049', '自动排气阀', '个', '1*0+1', '1'],
  ['031004003005', '陶瓷洗手盆', '组', '8*0+8', '8'],
];

const Tick = ({ label }: { label: string }) => (
  <span className="relative mx-auto block h-[14px] w-[14px]">
    <input
      type="checkbox"
      defaultChecked
      aria-label={label}
      className="peer block h-[14px] w-[14px] appearance-none rounded-[2px] border border-[#4098ff] bg-white checked:bg-[#4098ff]"
    />
    <svg
      width="14"
      height="14"
      viewBox="0 0 14 14"
      fill="none"
      className="pointer-events-none absolute inset-0 hidden peer-checked:block"
    >
      <path d="M3 7.200l2.700 2.800L11 4" stroke="#fff" strokeWidth="2" />
    </svg>
  </span>
);

const Toggle = ({ open }: { open?: boolean }) => (
  <svg width="13" height="13" viewBox="0 0 13 13" fill="none" className="shrink-0">
    <rect x=".5" y=".5" width="12" height="12" fill="#fff" stroke="#888" />
    <path d={open ? 'M3 6.500h7' : 'M3 6.500h7M6.500 3v7'} stroke="#111" />
  </svg>
);

// the bracketed note keeps its full-width brackets
const ItemName = ({ name }: { name: string }) => {
  const at = name.indexOf('（');
  if (at < 0) return <>{name}</>;
  return (
    <>
      {name.slice(0, at)}
      <span className="[font-feature-settings:normal]">{name.slice(at)}</span>
    </>
  );
};

const cell = 'border-b border-r border-[#bfbfbf]';
const text = `pb-[2px] ${cell}`;
const sel = 'border-y-2 border-r border-y-[#0066ff] border-r-[#bfbfbf] bg-[#92b1dc]';
const selText = `pb-[2px] ${sel}`;

const MainGrid = () => (
  <div className="flex border-t border-[#bfbfbf] pb-[2px]">
    <table className={`w-full min-w-0 table-fixed border-separate border-spacing-0 text-xs leading-[14px] text-[#222] ${grid}`}>
      <colgroup>
        {COLS.map((c, i) => (
          <col key={i} className={c} />
        ))}
      </colgroup>
      <thead>
        <tr>
          {HEADS.map((h, i) => (
            <th
              key={i}
              className={`h-6 whitespace-nowrap border-r border-[#bfbfbf] pb-[2px] ${
                i === 6 ? 'border-b-2 border-b-[#4098ff] bg-[#ffe6c8] text-[13px] font-bold' : 'border-b bg-[#e8e8e8] font-normal'
              } ${i === HEADS.length - 1 ? 'border-r-0' : ''}`}
            >
              {h}
            </th>
          ))}
        </tr>
      </thead>
      <tbody>
        <tr className="text-[13px] font-bold">
          <td className="h-[23px] border-b border-r border-b-[#bfbfbf] border-r-[#4098ff] bg-[#ffe6c8] text-center">B1</td>
          <td className={`border-l-2 border-l-[#0066ff] ${sel}`}>
            <Toggle open />
          </td>
          <td className={sel} />
          <td className={`pl-[2px] ${selText}`}>给水工程</td>
          <td className={sel}>
            <Tick label="锁定综合单价 B1" />
          </td>
          <td className={sel} />
          <td className="border-2 border-[#0066ff] bg-[#c3c3c3]" />
          <td className={sel} />
          <td className={sel} />
          <td className={sel} />
          <td className={sel} />
          <td className={sel} />
          <td className={`pr-[2px] text-right ${selText}`}>0</td>
          <td className={`whitespace-nowrap pl-[2px] ${selText}`}>
            乌鲁木齐安装<span className="[font-feature-settings:normal]">⋯</span>
          </td>
          <td className={sel} />
          <td className={`${sel} border-r-0`} />
        </tr>
        {ROWS.map(([code, name, unit, expr, qty], i) => {
          const tall = expr.length > 14;
          return (
            <tr key={code} className="bg-[#e3ffd9]">
              <td className={`bg-white text-center ${cell}`}>{i + 1}</td>
              <td className={cell}>
                <div className={`flex items-center pl-2 ${tall ? 'h-8' : 'h-[22px]'}`}>
                  <span className="h-full w-px bg-[#ffc56e]" />
                  <span className="h-px w-[3px] bg-[#ffc56e]" />
                  <Toggle />
                  <span className="ml-1 pb-[2px]">{code}</span>
                </div>
              </td>
              <td className={`text-center ${text}`}>项</td>
              <td className={`pl-[2px] ${text}`}>
                <ItemName name={name} />
              </td>
              <td className={cell}>
                <Tick label={`锁定综合单价 ${i + 1}`} />
              </td>
              <td className={`pl-[2px] ${text}`}>{unit}</td>
              <td className={`break-all pl-[2px] pr-[2px] ${text}`}>{expr}</td>
              <td className={cell} />
              <td className={`pr-[2px] text-right ${text}`}>{qty}</td>
              <td className={cell} />
              <td className={cell} />
              <td className={`pr-[2px] text-right ${text}`}>0</td>
              <td className={`pr-[2px] text-right ${text}`}>0</td>
              <td className={`whitespace-nowrap pl-[2px] ${text}`}>乌鲁木齐安装工程</td>
              <td className={`pl-[2px] ${text}`}>安装工程</td>
              <td className={`${cell} border-r-0`} />
            </tr>
          );
        })}
        <tr className="bg-[#e3ffd9]">
          {COLS.map((_, i) => (
            <td key={i} className="h-[2px] border-r border-[#bfbfbf] first:bg-white last:border-r-0" />
          ))}
        </tr>
      </tbody>
    </table>
    <div className="mb-[-2px] flex w-[14px] shrink-0 flex-col items-center bg-[#e8e8e8] py-1">
      <svg width="8" height="9" viewBox="0 0 8 9">
        <path d="M0 6l4-4 4 4z" fill="#666" />
      </svg>
      <div className="w-[10px] flex-1">
        <div className="h-[83%] rounded-full bg-[#bdbdbd]" />
      </div>
      <svg width="8" height="9" viewBox="0 0 8 9">
        <path d="M0 3h8L4 7z" fill="#666" />
      </svg>
    </div>
  </div>
);

const BottomScroll = () => (
  <div className="flex h-[14px]">
    <div className="flex flex-1 items-center justify-between bg-[#e8e8e8] px-1">
      <svg width="5" height="8" viewBox="0 0 5 8">
        <path d="M5 0L0 4l5 4z" fill="#666" />
      </svg>
      <div className="flex flex-1">
        <div className="ml-[19%] h-[10px] w-[62%] rounded-full bg-[#bdbdbd]" />
      </div>
      <svg width="5" height="8" viewBox="0 0 5 8">
        <path d="M0 0l5 4-5 4z" fill="#666" />
      </svg>
    </div>
    <div className="w-[14px] bg-[#d9d9d9]" />
  </div>
);

/* ---------- detail pane ---------- */

const DETAIL_TABS = [
  '工料机显示', '单价构成', '标准换算', '换算信息', '安装费用',
  '特征及内容', '组价方案', '工程量明细', '反查图形工程量', '说明信息',
];

const VARS: [string, string, string][] = [
  ['JZMJ', '建筑面积', 'm2'],
  ['DLZC', '道路总长(m)', 'm'],
  ['GDZC', '管道总长', 'm'],
  ['JLZC', '桥梁总长(m)', 'm'],
];

const picked = 'border-y-2 border-r border-y-[#808080] border-r-[#bfbfbf] bg-[#a9caea] pb-[2px]';

const DetailPane = () => {
  const [tab, setTab] = useState('工程量明细');
  return (
    <div className="flex flex-1 flex-col border-t-2 border-[#bfbfbf] bg-white">
      <div className="flex gap-[2px] border-b border-[#bfbfbf] bg-[#f5f5f5] pl-[7px] pt-[5px] text-xs">
        {DETAIL_TABS.map((t) => (
          <button
            key={t}
            onClick={() => setTab(t)}
            className={`h-6 rounded-t-[2px] px-[15px] ${t === tab ? 'bg-[#4098ff] text-white' : 'bg-[#bdbdbd] text-[#222]'}`}
          >
            {t}
          </button>
        ))}
      </div>
      <div className={`flex flex-1 text-xs leading-[14px] text-[#222] ${grid}`}>
        <div className="w-1/2 pl-2 pr-[10px] pt-[9px]">
          <table className="w-full table-fixed border-separate border-spacing-0">
            <thead>
              <tr className="bg-[#e8e8e8]">
                <th className="h-6 w-[85px] border-y border-r border-[#bfbfbf] font-normal">内容说明</th>
                <th className="border-y border-r border-[#bfbfbf] font-normal">计算式</th>
                <th className="w-[50px] border-y border-r border-[#bfbfbf] font-normal">结果</th>
                <th className="w-16 border-y border-r border-[#bfbfbf] font-normal">累加标识</th>
                <th className="w-[63px] border-y border-[#bfbfbf] font-normal">引用代码</th>
              </tr>
            </thead>
          </table>
        </div>
        <div className="w-1/2 border-l-2 border-[#bfbfbf]">
          <table className="w-[438px] table-fixed border-separate border-spacing-0">
            <thead>
              <tr className="bg-[#e8e8e8]">
                <th className={`h-6 w-[21px] ${cell}`} />
                <th className="w-[76px] border-b-2 border-r border-b-[#4098ff] border-r-[#bfbfbf] bg-[#ffe6c8] text-[13px] font-bold">
                  变量名
                </th>
                <th className={`w-[113px] font-normal ${cell}`}>变量说明</th>
                <th className={`w-[51px] font-normal ${cell}`}>单位</th>
                <th className={`w-[111px] font-normal ${cell}`}>计算公式</th>
                <th className={`w-[66px] font-normal ${cell}`}>变量值</th>
              </tr>
            </thead>
            <tbody>
              {VARS.map(([name, desc, unit], i) => {
                const on = i === 0;
                return (
                  <tr key={name}>
                    <td
                      className={`h-[25px] text-center ${
                        on ? 'border-b border-r border-b-[#bfbfbf] border-r-[#4098ff] bg-[#ffe6c8] text-[13px] font-bold' : cell
                      }`}
                    >
                      {i + 1}
                    </td>
                    <td className={`text-center ${on ? 'border-2 border-[#808080] bg-[#f2efe2] pb-[2px]' : `bg-[#fffffb] ${text}`}`}>
                      {name}
                    </td>
                    <td className={`pl-[2px] ${on ? picked : text}`}>{desc}</td>
                    <td className={`pl-[2px] ${on ? picked : `bg-[#fffffb] ${text}`}`}>{unit}</td>
                    <td className={`pl-[2px] ${on ? picked : `bg-[#fffffb] ${text}`}`}>0</td>
                    <td
                      className={`pr-[2px] text-right ${
                        on ? 'border-y-2 border-r-2 border-[#808080] bg-[#a9caea] pb-[2px]' : text
                      }`}
                    >
                      0
                    </td>
                  </tr>
                );
              })}
            </tbody>
          </table>
        </div>
      </div>
    </div>
  );
};

export default function App() {
  const [tab, setTab] = useState('分部分项');
  return (
    <div className={`flex min-h-screen flex-col bg-white ${ui}`}>
      <header className="bg-linear-to-b from-white to-[#f4f4f4]">
        <TitleBar />
        <MenuBar />
      </header>
      <Ribbon />
      <div className="flex flex-1">
        <Sidebar />
        <div className="flex min-w-0 flex-1 flex-col">
          <WorkTabs active={tab} onChange={setTab} />
          <div className="flex flex-1">
            <SectionTree />
            <main className="flex min-w-0 flex-1 flex-col">
              <MainGrid />
              <BottomScroll />
              <DetailPane />
            </main>
          </div>
        </div>
      </div>
    </div>
  );
}
